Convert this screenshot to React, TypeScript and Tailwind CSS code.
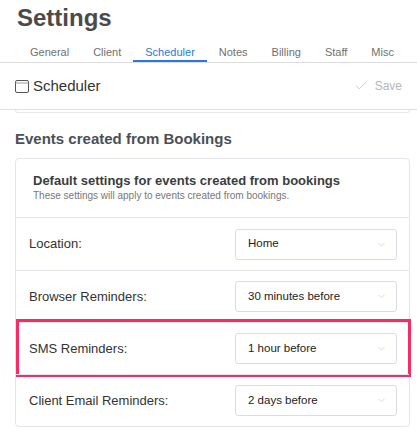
import { ChevronDown, Check } from "lucide-react";

const tabs = ["General", "Client", "Scheduler", "Notes", "Billing", "Staff", "Misc"];

const rows = [
  { label: "Location:", value: "Home" },
  { label: "Browser Reminders:", value: "30 minutes before" },
  { label: "SMS Reminders:", value: "1 hour before", highlight: true },
  { label: "Client Email Reminders:", value: "2 days before" },
];

function Select({ value }: { value: string }) {
  return (
    <div className="flex h-[31px] w-[162px] items-center justify-between rounded-[3px] border border-[#d9dce1] bg-white pl-[12px] pr-[9px]">
      <span className="text-[11.5px] text-[#222]">{value}</span>
      <ChevronDown className="h-[11px] w-[11px] text-[#c4c8cd]" strokeWidth={1.5} />
    </div>
  );
}

export default function App() {
  return (
    <div className="min-h-[433px] w-[417px] overflow-hidden bg-white font-['Liberation_Sans',Arial,sans-serif]">
      <h1 className="pl-[17px] pt-[4px] text-[24px] font-bold leading-[28px] text-[#4a4a4a]">Settings</h1>

      <div className="mt-[8px] flex border-b border-[#dcdcdc] pl-[18px]">
        {tabs.map((t) => (
          <div
            key={t}
            className={
              "border-b-2 px-[12px] pb-[1px] pt-[5px] text-[11px] leading-[14px] " +
              (t === "Scheduler" ? "border-[#2a78dd] text-[#2a78dd]" : "border-transparent text-[#707070]")
            }
          >
            {t}
          </div>
        ))}
      </div>

      <div className="flex h-[47px] items-center justify-between border-b border-[#dddfe2] pl-[15px] pr-[15px]">
        <div className="flex items-center gap-[4px]">
          <svg width="14" height="13" viewBox="0 0 14 13" fill="none" stroke="#555" strokeWidth="1">
            <rect x="0.5" y="0.5" width="13" height="12" rx="1.5" />
            <line x1="0.5" y1="3" x2="13.5" y2="3" stroke="#999" />
          </svg>
          <span className="text-[15px] text-[#333]">Scheduler</span>
        </div>
        <div className="flex items-center gap-[7px] text-[#b3b7bd]">
          <Check className="h-[14px] w-[14px]" strokeWidth={1.2} />
          <span className="text-[12px]">Save</span>
        </div>
      </div>
      <div className="ml-[15px] mr-[7px] h-[3px] rounded-b-[4px] border border-t-0 border-[#e6e8eb]" />

      <h2 className="mt-[17px] pl-[15px] text-[15px] font-bold leading-[18px] text-[#4b5056]">
        Events created from Bookings
      </h2>

      <div className="ml-[15px] mr-[7px] mt-[10px] rounded-[4px] border border-[#e3e6ea]">
        <div className="border-b border-[#e3e6ea] pb-[15px] pl-[17px] pt-[14px]">
          <div className="text-[13px] font-bold leading-[16px] text-[#3a3d41]">
            Default settings for events created from bookings
          </div>
          <div className="text-[10px] leading-[13px] text-[#777]">
            These settings will apply to events created from bookings.
          </div>
        </div>
        {rows.map((r, i) => (
          <div
            key={r.label}
            className={
              "relative flex h-[52px] items-center justify-between pl-[13px] pr-[12px] " +
              (i > 0 ? "border-t border-[#e3e6ea]" : "")
            }
          >
            <span className="text-[13px] text-[#333]">{r.label}</span>
            <Select value={r.value} />
            {r.highlight && (
              <div className="pointer-events-none absolute -bottom-[3px] -right-[2px] -top-[4px] left-0 border-[3px] border-[#fb2a63]" />
            )}
          </div>
        ))}
      </div>
    </div>
  );
}
